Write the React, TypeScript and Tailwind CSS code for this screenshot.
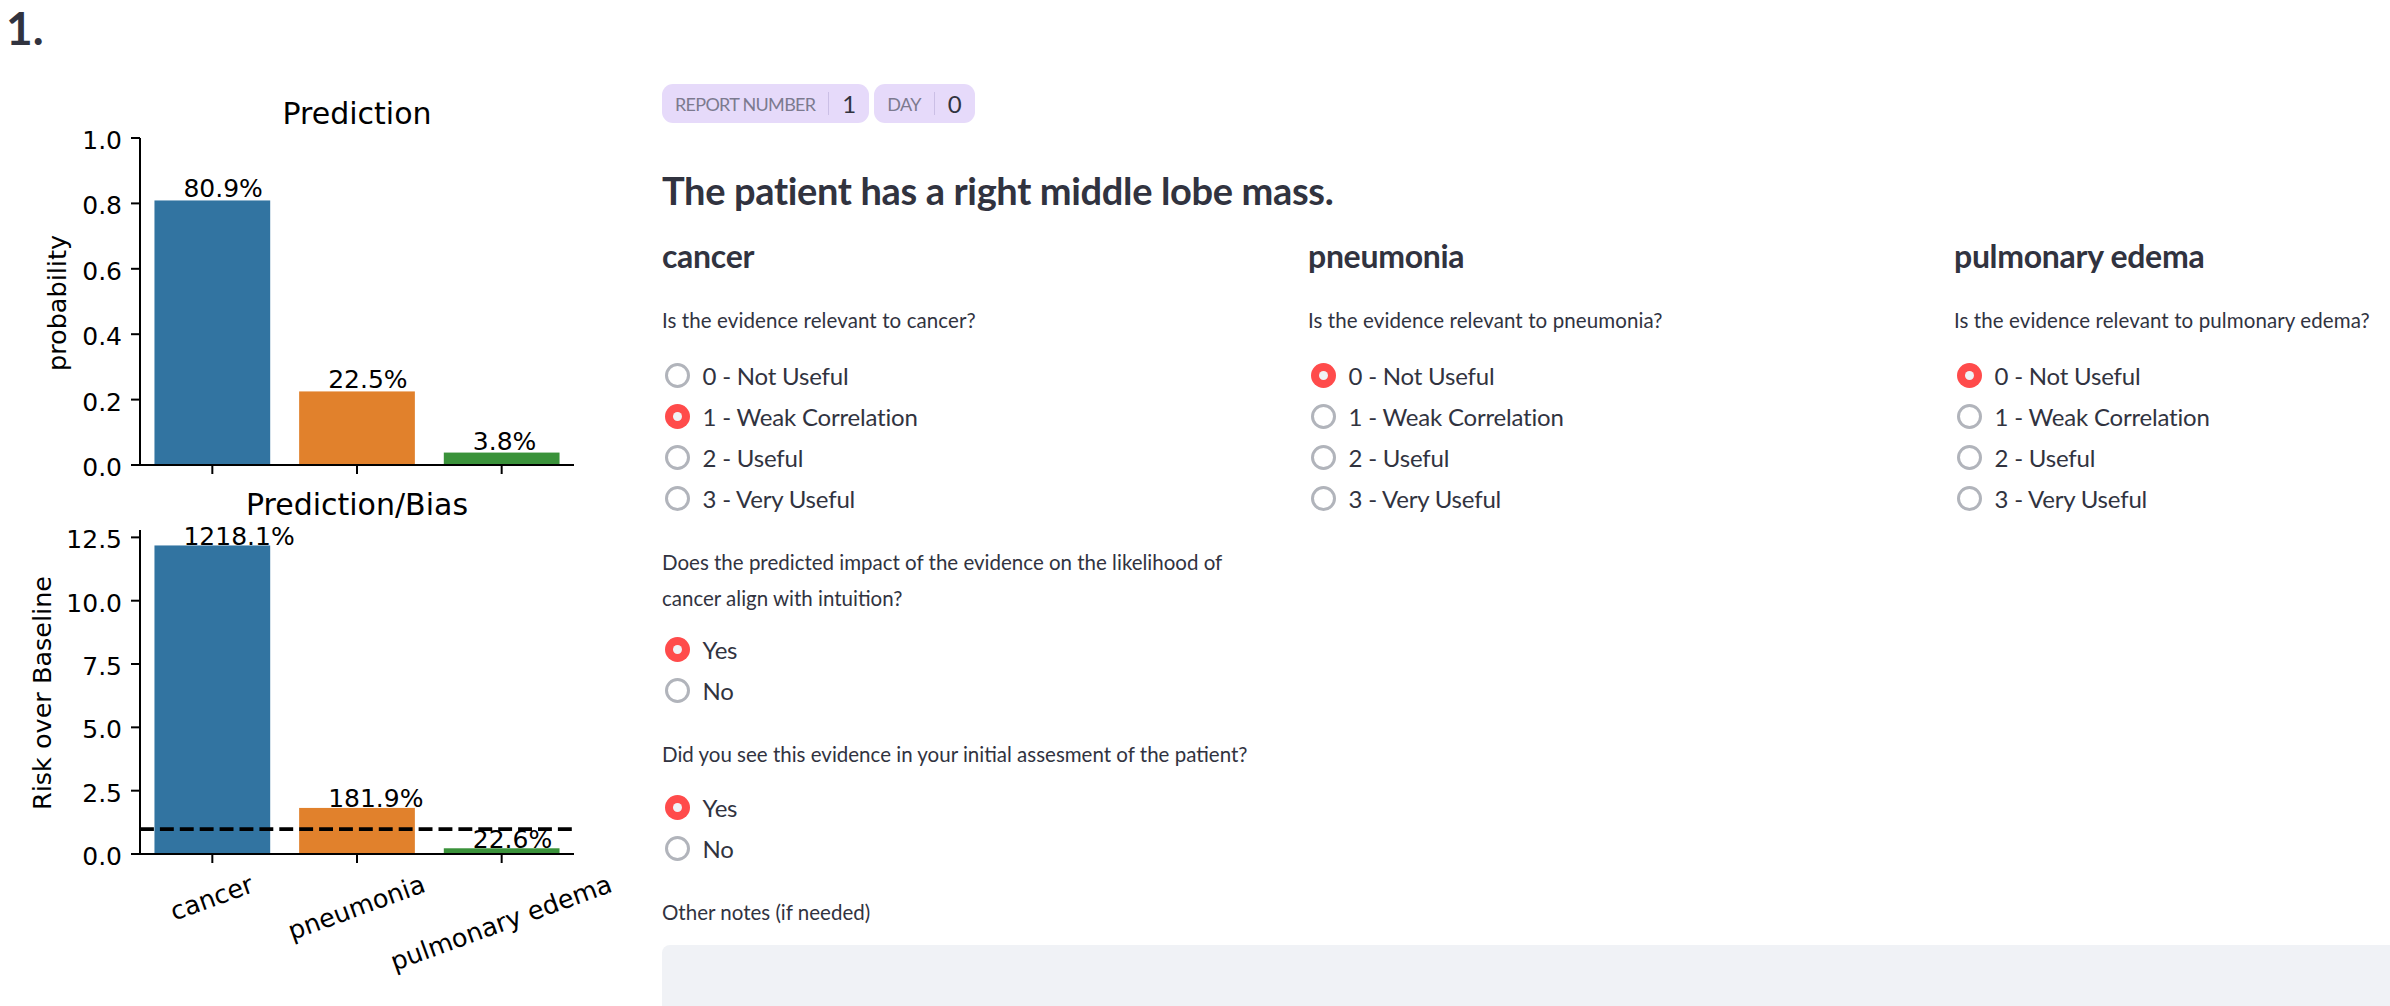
import React from "react";

const DV = "'DejaVu Sans', sans-serif";
const X0 = 140;
const X1 = 574;
const UNIT = (X1 - X0) / 3;
const CENTERS = [0, 1, 2].map((i) => X0 + UNIT * (i + 0.5));
const BW = UNIT * 0.8;
const COLORS = ["#3274a1", "#e1812c", "#3a923a"];
const CATS = ["cancer", "pneumonia", "pulmonary edema"];
const CAT_W = [3.373, 5.629, 9.187];

function Charts() {
  const topY = (v: number) => 465 - v * 327;
  const botY = (v: number) => 854 - v * 25.33;
  const topVals = [0.809, 0.225, 0.038];
  const topLbl = ["80.9%", "22.5%", "3.8%"];
  const botVals = [12.181, 1.819, 0.226];
  const botLbl = ["1218.1%", "181.9%", "22.6%"];
  const topTicks = [0, 0.2, 0.4, 0.6, 0.8, 1.0];
  const botTicks = [0, 2.5, 5, 7.5, 10, 12.5];
  return (
    <svg width={662} height={946} viewBox="0 60 662 946" style={{ fontFamily: DV }}>
      {/* top chart */}
      <text x={357} y={124} fontSize={30} textAnchor="middle" fill="#000">Prediction</text>
      {topVals.map((v, i) => (
        <rect key={i} x={CENTERS[i] - BW / 2} y={topY(v)} width={BW} height={465 - topY(v)} fill={COLORS[i]} />
      ))}
      {topVals.map((v, i) => (
        <text key={i} x={CENTERS[i] - BW / 2 + 29} y={topY(v) - 3} fontSize={25} fill="#000">{topLbl[i]}</text>
      ))}
      <line x1={X0} y1={138} x2={X0} y2={466} stroke="#000" strokeWidth={2} />
      <line x1={X0 - 1} y1={465} x2={X1} y2={465} stroke="#000" strokeWidth={2} />
      {topTicks.map((t) => (
        <g key={t}>
          <line x1={131} y1={topY(t)} x2={X0} y2={topY(t)} stroke="#000" strokeWidth={2} />
          <text x={122} y={topY(t) + 11} fontSize={25} textAnchor="end" fill="#000">{t.toFixed(1)}</text>
        </g>
      ))}
      {CENTERS.map((c) => (
        <line key={c} x1={c} y1={465} x2={c} y2={474} stroke="#000" strokeWidth={2} />
      ))}
      <text transform="translate(66 303) rotate(-90)" fontSize={25.5} textAnchor="middle" fill="#000">probability</text>

      {/* bottom chart */}
      <text x={357} y={515} fontSize={30} textAnchor="middle" fill="#000">Prediction/Bias</text>
      {botVals.map((v, i) => (
        <rect key={i} x={CENTERS[i] - BW / 2} y={botY(v)} width={BW} height={854 - botY(v)} fill={COLORS[i]} />
      ))}
      {botVals.map((v, i) => (
        <text key={i} x={CENTERS[i] - BW / 2 + 29} y={botY(v) - 0.5} fontSize={25} fill="#000">{botLbl[i]}</text>
      ))}
      <line x1={X0} y1={829} x2={X1} y2={829} stroke="#000" strokeWidth={3.75} strokeDasharray="13.9 6" />
      <line x1={X0} y1={530} x2={X0} y2={855} stroke="#000" strokeWidth={2} />
      <line x1={X0 - 1} y1={854} x2={X1} y2={854} stroke="#000" strokeWidth={2} />
      {botTicks.map((t) => (
        <g key={t}>
          <line x1={131} y1={botY(t)} x2={X0} y2={botY(t)} stroke="#000" strokeWidth={2} />
          <text x={122} y={botY(t) + 11} fontSize={25} textAnchor="end" fill="#000">{t.toFixed(1)}</text>
        </g>
      ))}
      {CENTERS.map((c) => (
        <line key={c} x1={c} y1={854} x2={c} y2={863} stroke="#000" strokeWidth={2} />
      ))}
      {CATS.map((name, i) => {
        const w = CAT_W[i] * 25;
        const h = w * 0.342 + 29 * 0.94;
        const cx = CENTERS[i];
        const cy = 871.5 + h / 2;
        return (
          <text key={name} transform={`translate(${cx} ${cy}) rotate(-20)`} y={7} fontSize={25.5} textAnchor="middle" fill="#000">
            {name}
          </text>
        );
      })}
      <text transform="translate(51 693) rotate(-90)" fontSize={25.5} textAnchor="middle" fill="#000">Risk over Baseline</text>
    </svg>
  );
}

function Radio({ label, checked }: { label: string; checked?: boolean }) {
  return (
    <div className="flex h-[41px] items-center pl-[2.5px]">
      {checked ? (
        <span className="flex h-[25px] w-[25px] shrink-0 items-center justify-center rounded-full bg-[#ff4b4b]">
          <span className="h-[9px] w-[9px] rounded-full bg-[#f0f2f6]" />
        </span>
      ) : (
        <span className="h-[25px] w-[25px] shrink-0 rounded-full border-[3px] border-[#b1b4bb]" />
      )}
      <span className="ml-[13px] whitespace-nowrap text-[24px] leading-[41px] tracking-[-0.2px] text-[#31333f]">{label}</span>
    </div>
  );
}

function Label({ children, className = "" }: { children: React.ReactNode; className?: string }) {
  return <div className={`text-[20.5px] leading-[36px] text-[#31333f] ${className}`}>{children}</div>;
}

const OPTIONS = ["0 - Not Useful", "1 - Weak Correlation", "2 - Useful", "3 - Very Useful"];

function Column({ name, selected, children }: { name: string; selected: number; children?: React.ReactNode }) {
  return (
    <div className="w-[622px] shrink-0">
      <div className="text-[32px] font-bold leading-[40px] tracking-[-0.3px] text-[#31333f]">{name}</div>
      <Label className="mt-[26px] whitespace-nowrap tracking-[0.1px]">Is the evidence relevant to {name}?</Label>
      <div className="mt-[17.5px]">
        {OPTIONS.map((o, i) => (
          <Radio key={o} label={o} checked={i === selected} />
        ))}
      </div>
      {children}
    </div>
  );
}

function Badge({ label, value }: { label: string; value: string }) {
  return (
    <div className="flex h-[39px] items-center rounded-[11px] bg-[#e6dafa] px-[13px]">
      <span className="text-[18px] uppercase leading-none tracking-[-0.7px] text-[#7c7a8f]">{label}</span>
      <span className="mx-[13px] h-[23px] w-px bg-[#cbbfe6]" />
      <span className="text-[24px] leading-none text-[#31333f]">{value}</span>
    </div>
  );
}

export default function App() {
  return (
    <div className="h-[1006px] w-[2390px] overflow-hidden bg-white [font-family:Lato,sans-serif]">
      <div className="h-[60px] pl-[6px] text-[46px] font-bold leading-[56px] text-[#31333f]">1.</div>
      <div className="flex">
        <div className="w-[662px] shrink-0">
          <Charts />
        </div>
        <div className="w-[1914px] shrink-0">
          <div className="mt-[24px] flex gap-[5px]">
            <Badge label="Report Number" value="1" />
            <Badge label="Day" value="0" />
          </div>
          <div className="mt-[43px] text-[38px] font-bold leading-[48px] tracking-[-0.35px] text-[#31333f]">
            The patient has a right middle lobe mass.
          </div>
          <div className="mt-[21.5px] flex items-start gap-[24px]">
            <Column name="cancer" selected={1}>
              <Label className="mt-[24.5px] w-[600px]">
                Does the predicted impact of the evidence on the likelihood of cancer align with intuition?
              </Label>
              <div className="mt-[13.5px]">
                <Radio label="Yes" checked />
                <Radio label="No" />
              </div>
              <Label className="mt-[25px] whitespace-nowrap">
                Did you see this evidence in your initial assesment of the patient?
              </Label>
              <div className="mt-[15px]">
                <Radio label="Yes" checked />
                <Radio label="No" />
              </div>
            </Column>
            <Column name="pneumonia" selected={0} />
            <Column name="pulmonary edema" selected={0} />
          </div>
          <Label className="mt-[25px]">Other notes (if needed)</Label>
          <div className="mt-[15px] h-[140px] w-full rounded-[8px] bg-[#f0f2f6]" />
        </div>
      </div>
    </div>
  );
}
